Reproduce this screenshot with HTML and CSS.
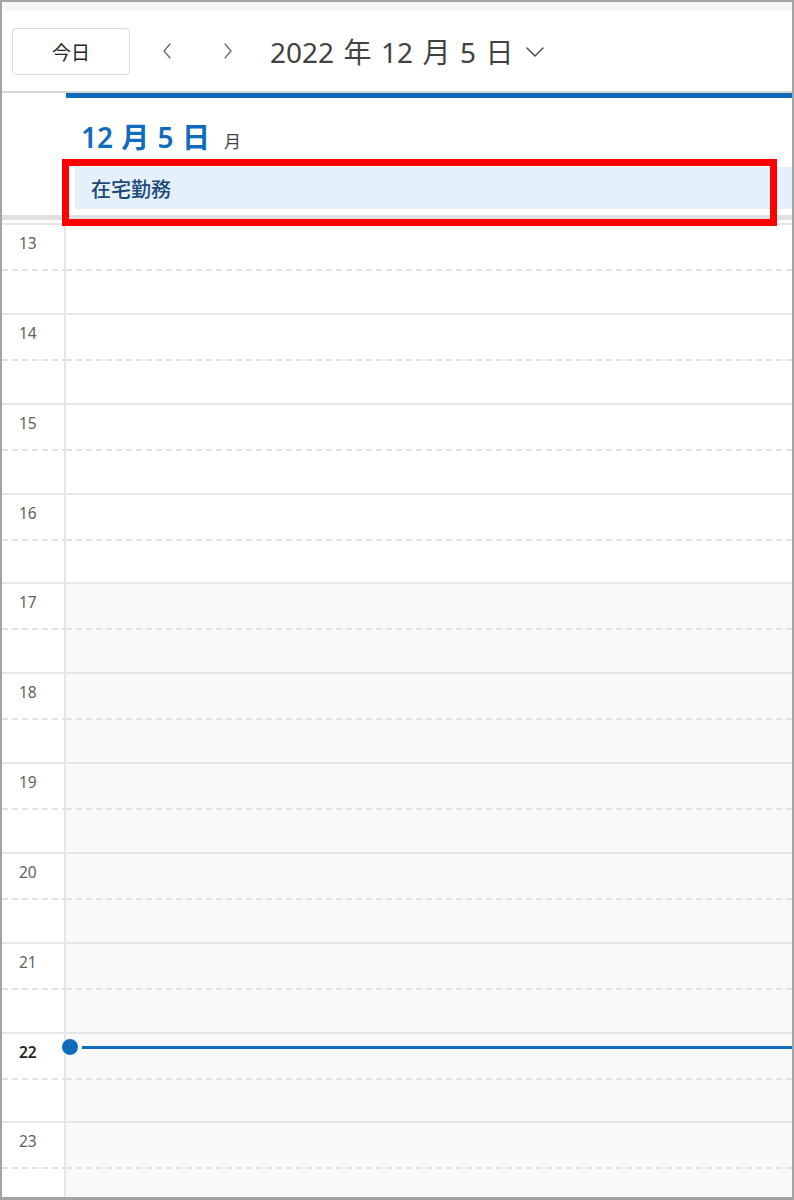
FILE: index.html
```html
<!DOCTYPE html>
<html lang="ja">
<head>
<meta charset="utf-8">
<title>カレンダー</title>
<link rel="stylesheet" href="styles.css">
</head>
<body>
<div class="frame">
  <div class="strip"></div>
  <header class="toolbar">
    <button class="today">今日</button>
    <button class="nav prev" aria-label="前へ">
      <svg width="8" height="16" viewBox="0 0 8 16"><polyline points="7,1 1,8 7,15" fill="none" stroke="#6b6b6b" stroke-width="1.3" stroke-linecap="round" stroke-linejoin="round"/></svg>
    </button>
    <button class="nav next" aria-label="次へ">
      <svg width="8" height="16" viewBox="0 0 8 16"><polyline points="1,1 7,8 1,15" fill="none" stroke="#6b6b6b" stroke-width="1.3" stroke-linecap="round" stroke-linejoin="round"/></svg>
    </button>
    <div class="title"><span class="title-text">2022 年 12 月 5 日</span><svg class="caret" width="18" height="10" viewBox="0 0 18 10"><polyline points="1,1 9,9 17,1" fill="none" stroke="#555" stroke-width="1.6" stroke-linecap="round" stroke-linejoin="round"/></svg></div>
  </header>
  <div class="head">
    <div class="gutter-head"></div>
    <div class="day-head">
      <div class="date"><span class="dnum">12 月 5 日</span><span class="dow">月</span></div>
      <div class="event">在宅勤務</div>
    </div>
  </div>
  <div class="sep"></div>
  <div class="rows">
    <div class="row"><div class="hour">13</div><div class="cell"></div></div>
    <div class="row"><div class="hour">14</div><div class="cell"></div></div>
    <div class="row"><div class="hour">15</div><div class="cell"></div></div>
    <div class="row"><div class="hour">16</div><div class="cell"></div></div>
    <div class="row off"><div class="hour">17</div><div class="cell"></div></div>
    <div class="row off"><div class="hour">18</div><div class="cell"></div></div>
    <div class="row off"><div class="hour">19</div><div class="cell"></div></div>
    <div class="row off"><div class="hour">20</div><div class="cell"></div></div>
    <div class="row off"><div class="hour">21</div><div class="cell"></div></div>
    <div class="row off current"><div class="hour">22</div><div class="cell"><div class="now"><span class="dot"></span><span class="line"></span></div></div></div>
    <div class="row off"><div class="hour">23</div><div class="cell"></div></div>
  </div>
  <div class="annot"></div>
</div>
</body>
</html>
```
FILE: styles.css
```css
* { box-sizing: border-box; }
html, body { margin: 0; padding: 0; background: #fff; }
body {
  font-family: "Noto Sans", "Noto Sans CJK JP", sans-serif;
  color: #242424;
}
.frame {
  position: relative;
  width: 794px;
  height: 1200px;
  border: 2px solid #a3a3a3;
  border-bottom-width: 3px;
  overflow: hidden;
  background: #fff;
}
.strip { height: 9px; background: #f6f6f6; }
.toolbar {
  height: 80px;
  display: flex;
  align-items: center;
  padding-left: 10px;
}
.today {
  width: 118px;
  height: 47px;
  background: #fff;
  border: 1px solid #dadada;
  border-radius: 4px;
  font-family: "Noto Sans CJK JP", sans-serif;
  font-size: 19px;
  color: #242424;
  padding: 0;
}
.nav {
  width: 40px;
  height: 40px;
  border: 0;
  background: transparent;
  padding: 0;
  display: flex;
  align-items: center;
  justify-content: center;
}
.prev { margin-left: 17px; }
.next { margin-left: 21px; }
.title {
  margin-left: 22px;
  display: flex;
  align-items: center;
}
.title-text {
  font-size: 28px;
  color: #424242;
  word-spacing: 2.2px;
  white-space: nowrap;
}
.caret { margin-left: 12px; margin-top: 2px; }
.head {
  display: grid;
  grid-template-columns: 64px 1fr;
  border-top: 2px solid #d6d6d6;
  height: 124px;
}
.day-head {
  border-top: 5px solid #0f6cbd;
  display: flex;
  flex-direction: column;
}
.date {
  display: flex;
  align-items: baseline;
  padding-left: 15px;
  height: 69px;
  padding-top: 18px;
}
.dnum {
  font-size: 28px;
  font-weight: 600;
  color: #0f6cbd;
  word-spacing: 1px;
  white-space: nowrap;
}
.dow {
  font-family: "Noto Sans CJK JP", sans-serif;
  font-size: 17px;
  color: #424242;
  margin-left: 14px;
}
.event {
  margin-left: 9px;
  height: 42px;
  background: #e4f0fa;
  border-radius: 2px 0 0 2px;
  padding-left: 16px;
  display: flex;
  align-items: center;
  font-family: "Noto Sans CJK JP", sans-serif;
  font-size: 20px;
  font-weight: 500;
  color: #1c4a78;
}
.sep {
  height: 5px;
  background: #e0e0e0;
  margin-bottom: 3px;
}
.row {
  display: grid;
  grid-template-columns: 64px 1fr;
  height: 89.85px;
  border-top: 2px solid #e6e6e6;
}
.hour, .cell {
  background-image: linear-gradient(90deg, #e2e2e2 6px, transparent 6px);
  background-size: 10px 1.5px;
  background-repeat: repeat-x;
  background-position: 0 44px;
}
.hour {
  border-right: 2px solid #e6e6e6;
  font-size: 15.5px;
  color: #616161;
  padding-left: 17px;
  padding-top: 8px;
  line-height: 20px;
}
.current .hour { color: #242424; font-weight: 600; }
.off .cell { background-color: #f9f9f9; }
.current .cell { position: relative; }
.now {
  position: absolute;
  left: -5px;
  right: 0;
  top: 4px;
  height: 18px;
  display: flex;
  align-items: center;
}
.dot {
  width: 18px;
  height: 18px;
  border-radius: 50%;
  background: #0f6cbd;
  border: 1px solid #fff;
  flex: none;
}
.line {
  flex: 1;
  height: 3px;
  background: #0f6cbd;
  margin-left: 3px;
  margin-top: 2px;
}
.annot {
  position: absolute;
  left: 60px;
  top: 157px;
  width: 715px;
  height: 67px;
  border: 7px solid #ff0000;
  pointer-events: none;
}
```
